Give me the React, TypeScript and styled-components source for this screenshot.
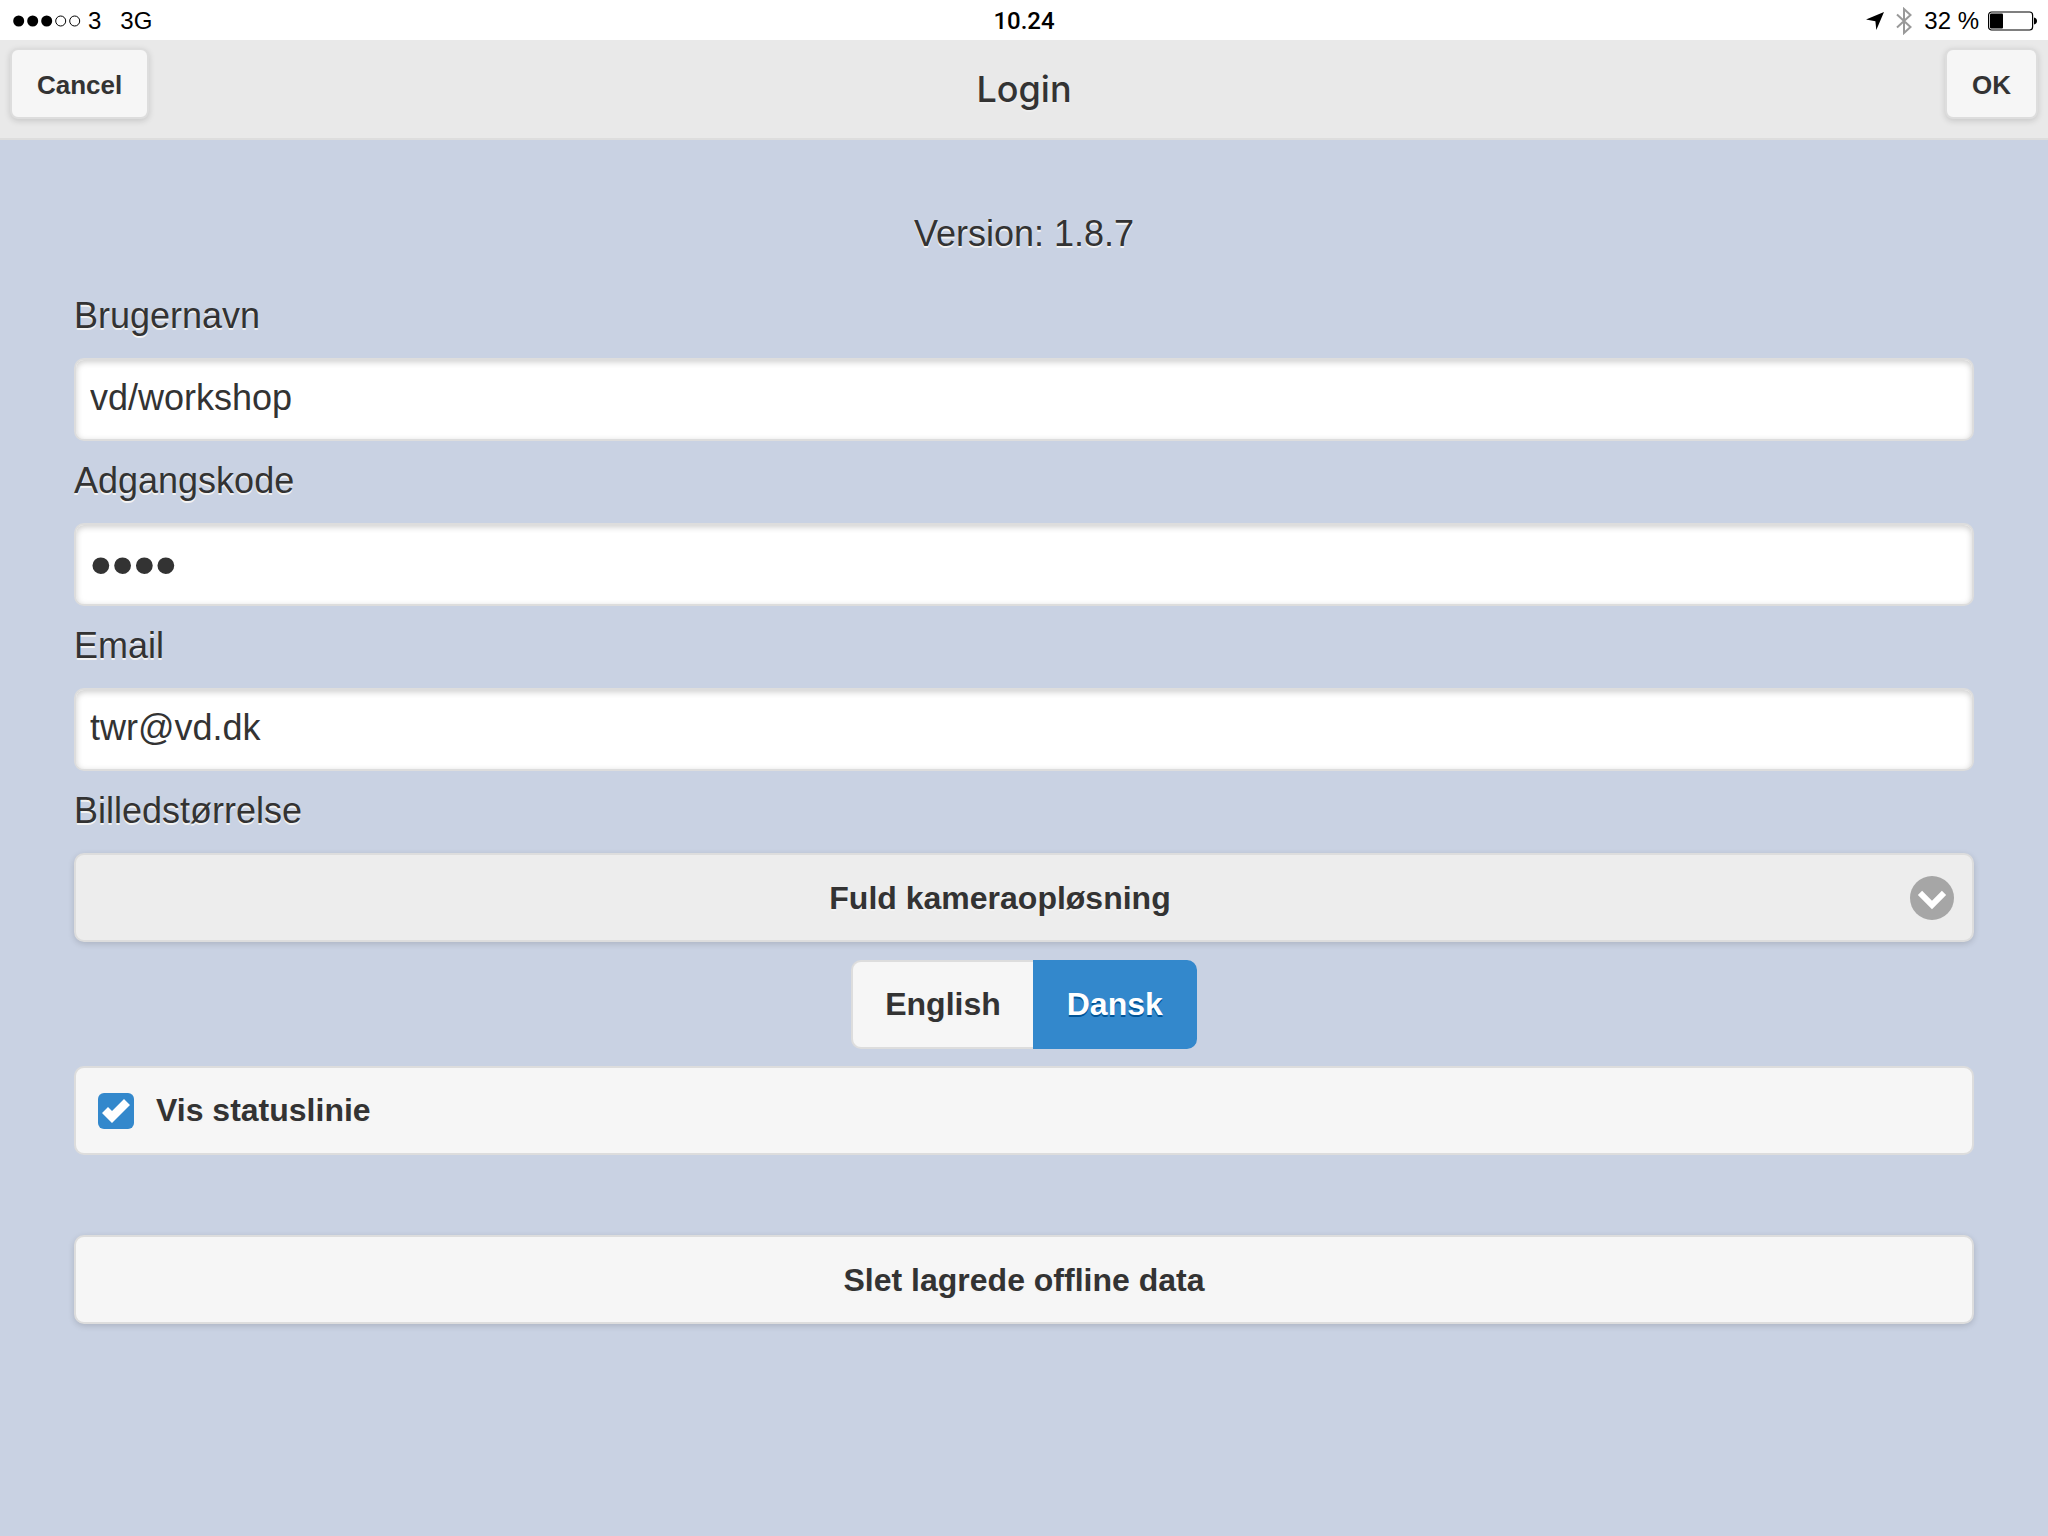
import React, { useState } from "react";
import styled, { createGlobalStyle, css } from "styled-components";

const GlobalStyle = createGlobalStyle`
  *, *::before, *::after { box-sizing: border-box; }
  html { height: 100%; background: #c9d2e3; }
  body {
    margin: 0;
    min-height: 100%;
    background: #c9d2e3;
    color: #333;
    font-family: "Liberation Sans", Arial, Helvetica, sans-serif;
  }
`;

const StatusBar = styled.div`
  display: grid;
  grid-template-columns: 1fr auto 1fr;
  align-items: center;
  height: 40px;
  padding: 1px 11px 0;
  background: #fff;
  color: #000;
  font-size: 24px;
  line-height: 40px;
`;

const StatusGroup = styled.div<{ $end?: boolean }>`
  display: flex;
  align-items: center;
  gap: ${(p) => (p.$end ? "12px" : "7px")};
  justify-content: ${(p) => (p.$end ? "flex-end" : "flex-start")};
`;

const Charge = styled.span`
  display: flex;
  align-items: center;
  gap: 9px;
`;

const Network = styled.span`
  margin-left: 12px;
`;

const Clock = styled.time`
  font-family: Roboto, "Liberation Sans", sans-serif;
  font-weight: 500;
`;

const Header = styled.header`
  display: grid;
  grid-template-columns: 1fr auto 1fr;
  align-items: start;
  height: 100px;
  padding: 8px 10px;
  background: #e9e9e9;
  border-bottom: 2px solid #ddd;
`;

const Title = styled.h1`
  margin: 0;
  padding-top: 18px;
  font-family: Inter, "Liberation Sans", sans-serif;
  font-size: 36px;
  font-weight: 500;
  line-height: 46px;
  text-shadow: 0 2px 0 #eee;
`;

const raised = css`
  border: 2px solid #ddd;
  background: #f6f6f6;
  color: #333;
  font-family: inherit;
  font-weight: 700;
  text-shadow: 0 2px 0 #f3f3f3;
  box-shadow: 0 2px 6px rgba(0, 0, 0, 0.15);
  cursor: pointer;
`;

const HeaderButton = styled.button<{ $end?: boolean }>`
  ${raised}
  justify-self: ${(p) => (p.$end ? "end" : "start")};
  height: 71px;
  padding: 3px 25px 0;
  border-radius: 8px;
  font-size: 26px;
`;

const Form = styled.form`
  display: flex;
  flex-direction: column;
  padding: 71px 74px;
`;

const Version = styled.p`
  margin: 0 0 19px;
  font-size: 36px;
  line-height: 46px;
  text-align: center;
  text-shadow: 0 2px 0 #f3f3f3;
`;

const Field = styled.div`
  display: flex;
  flex-direction: column;
  gap: 19px;
  padding-top: 17px;
`;

const FieldLabel = styled.label`
  font-size: 36px;
  line-height: 46px;
  text-shadow: 0 2px 0 #f3f3f3;
`;

const TextInput = styled.input`
  width: 100%;
  height: 83px;
  padding: 0 14px 3px;
  border: 2px solid #ddd;
  border-radius: 10px;
  outline: none;
  background: #fff;
  color: #333;
  font-family: inherit;
  font-size: 36px;
  box-shadow: inset 0 2px 6px rgba(0, 0, 0, 0.2);

  &[type="password"] {
    padding-bottom: 0;
    font-size: 62px;
  }
`;

const SelectWrap = styled.div`
  position: relative;
`;

const Select = styled.select`
  ${raised}
  appearance: none;
  display: block;
  width: 100%;
  height: 89px;
  padding: 1px 80px 0 32px;
  border-radius: 10px;
  background: #ededed;
  font-size: 32px;
  text-align: center;
  text-align-last: center;
`;

const SelectIcon = styled.span`
  position: absolute;
  top: 0;
  right: 20px;
  bottom: 0;
  display: flex;
  align-items: center;
  pointer-events: none;
`;

const IconDisc = styled.span`
  display: grid;
  place-items: center;
  width: 44px;
  height: 44px;
  border-radius: 50%;
  background: #a6a6a6;
`;

const Segmented = styled.fieldset`
  display: flex;
  align-self: center;
  margin: 18px 0 17px;
  padding: 0;
  border: 0;
`;

const HiddenInput = styled.input`
  position: absolute;
  width: 1px;
  height: 1px;
  margin: 0;
  opacity: 0;
`;

const Segment = styled.label`
  height: 89px;
  padding: 0 32px;
  border: 2px solid #ddd;
  background: #f6f6f6;
  font-size: 32px;
  font-weight: 700;
  line-height: 85px;
  text-shadow: 0 2px 0 #f3f3f3;
  cursor: pointer;

  &:first-of-type {
    border-right: 0;
    border-radius: 10px 0 0 10px;
  }
  &:last-of-type {
    border-radius: 0 10px 10px 0;
  }
  &:has(input:checked) {
    border-color: #38c;
    background: #38c;
    color: #fff;
    text-shadow: 0 2px 0 #059;
  }
`;

const CheckRow = styled.label`
  display: flex;
  align-items: center;
  gap: 22px;
  height: 89px;
  padding: 0 22px;
  border: 2px solid #ddd;
  border-radius: 10px;
  background: #f6f6f6;
  font-size: 32px;
  font-weight: 700;
  text-shadow: 0 2px 0 #f3f3f3;
  cursor: pointer;
`;

const CheckBox = styled.span<{ $on: boolean }>`
  display: grid;
  place-items: center;
  width: 36px;
  height: 36px;
  border-radius: 6px;
  background: ${(p) => (p.$on ? "#38c" : "#b4b4b4")};
`;

const WideButton = styled.button`
  ${raised}
  height: 89px;
  margin-top: 80px;
  padding: 1px 32px 0;
  border-radius: 10px;
  font-size: 32px;
`;

function Signal() {
  return (
    <svg width="70" height="12" viewBox="-2 0 70 12" role="img" aria-label="Signal">
      {[0, 1, 2, 3, 4].map((i) => (
        <circle
          key={i}
          cx={5.7 + i * 14}
          cy="6"
          r={i < 3 ? 5.5 : 5}
          fill={i < 3 ? "#000" : "none"}
          stroke={i < 3 ? "none" : "#000"}
        />
      ))}
    </svg>
  );
}

function LocationArrow() {
  return (
    <svg width="18" height="18" viewBox="0 0 18 18" aria-hidden="true">
      <path d="M18 0 10.3 18 9.4 9.2 0 7.6Z" fill="#000" />
    </svg>
  );
}

function Bluetooth() {
  return (
    <svg width="16" height="28" viewBox="0 0 16 28" aria-hidden="true">
      <path
        d="M1 7.5 14.5 20 8 26V2l6.5 6L1 20.5"
        fill="none"
        stroke="#999"
        strokeWidth="2"
      />
    </svg>
  );
}

function Battery() {
  return (
    <svg width="49" height="20" viewBox="0 0 49 20" aria-hidden="true">
      <rect x="0.6" y="1" width="44" height="18" rx="3" fill="none" stroke="#000" strokeWidth="1.2" />
      <rect x="2" y="2.5" width="13" height="15" rx="1" fill="#000" />
      <path d="M46 6.5q3 .6 3 3.500t-3 3.500Z" fill="#000" />
    </svg>
  );
}

function Caret() {
  return (
    <svg width="28" height="28" viewBox="0 0 14 14" overflow="visible" aria-hidden="true">
      <path d="M11.949 3.404 7 8.354 2.05 3.404-.071 5.525 7 12.596l7.07-7.071Z" fill="#fff" />
    </svg>
  );
}

function Check() {
  return (
    <svg width="28" height="28" viewBox="0 0 14 14" aria-hidden="true">
      <path d="M14 4 11 1 5.003 6.997 3 5 0 8 5 13Z" fill="#fff" />
    </svg>
  );
}

export default function App() {
  const [user, setUser] = useState("vd/workshop");
  const [code, setCode] = useState("1234");
  const [email, setEmail] = useState("twr@vd.dk");
  const [language, setLanguage] = useState("Dansk");
  const [showStatus, setShowStatus] = useState(true);

  return (
    <>
      <GlobalStyle />
      <StatusBar>
        <StatusGroup>
          <Signal />
          <span>3</span>
          <Network>3G</Network>
        </StatusGroup>
        <Clock>10.24</Clock>
        <StatusGroup $end>
          <LocationArrow />
          <Bluetooth />
          <Charge>
            <span>32 %</span>
            <Battery />
          </Charge>
        </StatusGroup>
      </StatusBar>
      <Header>
        <HeaderButton type="button">Cancel</HeaderButton>
        <Title>Login</Title>
        <HeaderButton type="submit" form="login" $end>
          OK
        </HeaderButton>
      </Header>
      <Form id="login" onSubmit={(e) => e.preventDefault()}>
        <Version>Version: 1.8.7</Version>
        <Field>
          <FieldLabel htmlFor="user">Brugernavn</FieldLabel>
          <TextInput id="user" type="text" value={user} onChange={(e) => setUser(e.target.value)} />
        </Field>
        <Field>
          <FieldLabel htmlFor="code">Adgangskode</FieldLabel>
          <TextInput id="code" type="password" value={code} onChange={(e) => setCode(e.target.value)} />
        </Field>
        <Field>
          <FieldLabel htmlFor="email">Email</FieldLabel>
          <TextInput id="email" type="email" value={email} onChange={(e) => setEmail(e.target.value)} />
        </Field>
        <Field>
          <FieldLabel htmlFor="size">Billedstørrelse</FieldLabel>
          <SelectWrap>
            <Select id="size">
              <option>Fuld kameraopløsning</option>
            </Select>
            <SelectIcon>
              <IconDisc>
                <Caret />
              </IconDisc>
            </SelectIcon>
          </SelectWrap>
        </Field>
        <Segmented>
          {["English", "Dansk"].map((name) => (
            <Segment key={name}>
              <HiddenInput
                type="radio"
                name="language"
                checked={language === name}
                onChange={() => setLanguage(name)}
              />
              {name}
            </Segment>
          ))}
        </Segmented>
        <CheckRow>
          <HiddenInput
            type="checkbox"
            checked={showStatus}
            onChange={(e) => setShowStatus(e.target.checked)}
          />
          <CheckBox $on={showStatus}>{showStatus && <Check />}</CheckBox>
          Vis statuslinie
        </CheckRow>
        <WideButton type="button">Slet lagrede offline data</WideButton>
      </Form>
    </>
  );
}
